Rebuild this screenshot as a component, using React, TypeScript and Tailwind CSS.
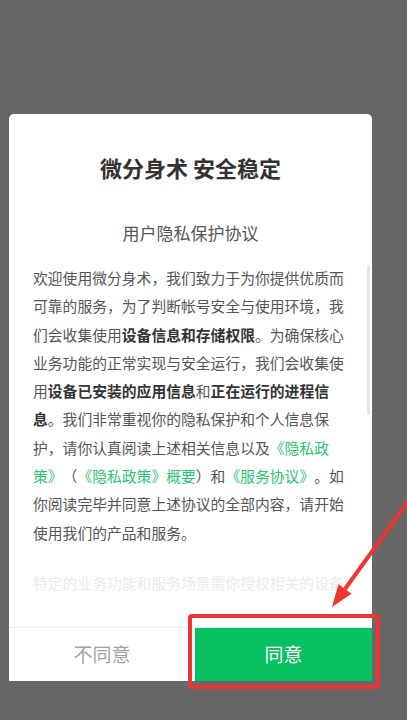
const lines: { t: string; b?: boolean; g?: boolean }[][] = [
  [{ t: "欢迎使用微分身术，我们致力于为你提供优质而" }],
  [{ t: "可靠的服务，为了判断帐号安全与使用环境，我" }],
  [{ t: "们会收集使用" }, { t: "设备信息和存储权限", b: true }, { t: "。为确保核心" }],
  [{ t: "业务功能的正常实现与安全运行，我们会收集使" }],
  [
    { t: "用" },
    { t: "设备已安装的应用信息", b: true },
    { t: "和" },
    { t: "正在运行的进程信", b: true },
  ],
  [{ t: "息", b: true }, { t: "。我们非常重视你的隐私保护和个人信息保" }],
  [{ t: "护，请你认真阅读上述相关信息以及" }, { t: "《隐私政", g: true }],
  [
    { t: "策》", g: true },
    { t: "（" },
    { t: "《隐私政策》概要", g: true },
    { t: "）和" },
    { t: "《服务协议》", g: true },
    { t: "。如" },
  ],
  [{ t: "你阅读完毕并同意上述协议的全部内容，请开始" }],
  [{ t: "使用我们的产品和服务。" }],
];

export default function App() {
  return (
    <div
      className="relative min-h-[720px] w-full overflow-hidden bg-[#676767] pt-[114px]"
      style={{ fontFamily: '"Noto Sans CJK SC", "Noto Sans", sans-serif' }}
    >
      {/* Dialog card */}
      <div className="relative ml-[9px] flex h-[567px] w-[363px] flex-col rounded-t-[5px] bg-white">
        <div className="flex-1 overflow-hidden">
          <h1 className="pt-[38px] text-center text-[22px] leading-[30px] font-bold text-[#333]">
            微分身术 安全稳定
          </h1>
          <h2 className="mt-[39px] text-center text-[17px] leading-[24px] text-[#555]">
            用户隐私保护协议
          </h2>
          <div className="mt-[19px] pl-[24px] text-[14.8px] leading-[28.3px] text-[#555] [text-spacing-trim:space-all]">
            {lines.map((line, i) => (
              <div key={i} className="whitespace-nowrap">
                {line.map((s, j) => (
                  <span
                    key={j}
                    className={
                      s.b
                        ? "font-semibold text-[#333]"
                        : s.g
                          ? "text-[#2cc672]"
                          : ""
                    }
                  >
                    {s.t}
                  </span>
                ))}
              </div>
            ))}
            <div className="mt-[22px] whitespace-nowrap text-[#ebebeb]">
              特定的业务功能和服务场景需你授权相关的设备
            </div>
          </div>
        </div>

        {/* Scrollbar */}
        <div className="absolute top-[151px] right-[2px] h-[150px] w-[3px] rounded-full bg-[#e6e6e6]" />

        {/* Buttons */}
        <div className="flex h-[54px] border-t border-[#eeeeee]">
          <button className="flex-1 text-center text-[19px] text-[#a3a3a3]">
            不同意
          </button>
          <button className="w-[177px] bg-[#07c160] text-center text-[19px] text-white">
            同意
          </button>
        </div>
      </div>

      {/* Red highlight box */}
      <div className="absolute top-[614px] left-[188px] h-[75px] w-[192px] rounded-[4px] border-4 border-[#ef3431]" />

      {/* Red arrow */}
      <svg
        className="pointer-events-none absolute top-0 left-0"
        width="407"
        height="720"
        viewBox="0 0 407 720"
      >
        <line
          x1="412"
          y1="496"
          x2="345"
          y2="589"
          stroke="#ef3431"
          strokeWidth="4"
        />
        <polygon points="332,607 351.5,593.7 338.5,584.3" fill="#ef3431" />
      </svg>
    </div>
  );
}
